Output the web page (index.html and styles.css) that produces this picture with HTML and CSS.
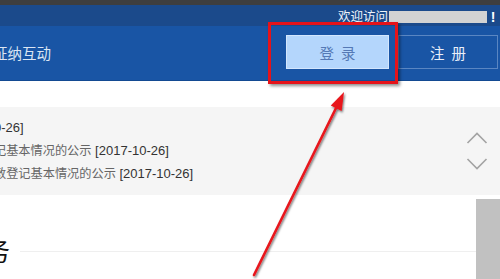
FILE: index.html
```html
<!DOCTYPE html>
<html lang="zh-CN">
<head>
<meta charset="utf-8">
<title>证纳互动</title>
<link rel="stylesheet" href="styles.css">
</head>
<body>
<div class="page">
  <div class="topstrip"></div>
  <div class="welcome">
    <span class="welcome-text">欢迎访问</span><span class="redact"></span><span class="bang">!</span>
  </div>
  <header class="header">
    <div class="site-title">证纳互动</div>
    <nav class="actions">
      <a class="btn btn-login">登 录</a>
      <a class="btn btn-register">注 册</a>
    </nav>
  </header>
  <div class="gap"></div>
  <section class="notice">
    <ul class="notice-list">
      <li><span class="date">0-26]</span></li>
      <li><span class="title">记基本情况的公示</span> <span class="date">[2017-10-26]</span></li>
      <li><span class="title">敦登记基本情况的公示</span> <span class="date">[2017-10-26]</span></li>
    </ul>
    <div class="arrows">
      <svg class="chev" width="22" height="12" viewBox="0 0 22 12"><polyline points="1.5,11 11,1.5 20.5,11" fill="none" stroke="#a3a3a3" stroke-width="1.6"/></svg>
      <svg class="chev" width="22" height="12" viewBox="0 0 22 12"><polyline points="1.5,1 11,10.5 20.5,1" fill="none" stroke="#a3a3a3" stroke-width="1.6"/></svg>
    </div>
  </section>
  <section class="content">
    <div class="main">
      <div class="heading"><h2>务</h2><span class="rule"></span></div>
    </div>
    <div class="scroll"></div>
  </section>
  <div class="annot-box"></div>
  <svg class="annot-arrow" width="500" height="279" viewBox="0 0 500 279">
    <defs>
      <filter id="sh" x="-20%" y="-20%" width="140%" height="140%">
        <feDropShadow dx="1" dy="1.5" stdDeviation="1" flood-color="#000" flood-opacity="0.55"/>
      </filter>
    </defs>
    <g filter="url(#sh)">
      <line x1="254" y1="275" x2="338" y2="104" stroke="#e8141b" stroke-width="2.6" stroke-linecap="round"/>
      <polygon points="344,92 341.6,111 330.8,105.6" fill="#e8141b"/>
    </g>
  </svg>
</div>
</body>
</html>
```
FILE: styles.css
```css
* { box-sizing: border-box; }
html, body { margin: 0; padding: 0; }
body {
  width: 500px;
  height: 279px;
  overflow: hidden;
  background: #fff;
  font-family: "Noto Sans CJK SC", "Liberation Sans", sans-serif;
}
.page {
  position: relative;
  width: 500px;
  height: 279px;
  overflow: hidden;
}
.topstrip {
  height: 5px;
  background: #3e3e3e;
}
.welcome {
  height: 21px;
  background: #1b4a8b;
  display: flex;
  justify-content: flex-end;
  align-items: center;
  padding-right: 4px;
  color: #eef3fa;
  font-size: 12.5px;
  line-height: 1;
}
.welcome-text { margin-top: 1px; }
.redact {
  display: inline-block;
  width: 98px;
  height: 12px;
  background: #d3d3d3;
  margin-left: 1px;
  margin-top: 2px;
}
.bang {
  display: inline-block;
  width: 6px;
  margin-left: 3px;
  text-align: center;
  font-family: "Liberation Sans", sans-serif;
  font-weight: bold;
  font-size: 14px;
  line-height: 14px;
  color: #ffffff;
  margin-top: 2px;
}
.header {
  height: 55px;
  background: #1955a5;
  border-bottom: 1px solid #134a92;
  display: flex;
  justify-content: space-between;
  align-items: flex-start;
}
.site-title {
  margin-left: -7px;
  margin-top: 17px;
  font-size: 14.5px;
  color: #dbe5f3;
  line-height: 20px;
}
.actions {
  display: flex;
  gap: 9px;
  margin-top: 9px;
  margin-right: 2px;
}
.btn {
  display: flex;
  align-items: center;
  justify-content: center;
  height: 34px;
  font-size: 14.5px;
  letter-spacing: 2px;
  text-indent: 2px;
}
.btn-login {
  width: 103px;
  background: #b4d6fc;
  border: 1px solid #d3e6fd;
  color: #5579b5;
}
.btn-register {
  width: 100px;
  border: 1px solid #5a86c2;
  color: #e9f0fa;
}
.gap { height: 26px; }
.notice {
  height: 88px;
  background: #f5f5f5;
  display: flex;
  justify-content: space-between;
  padding-top: 7px;
}
.notice-list {
  list-style: none;
  margin: 0 0 0 -6px;
  padding: 0;
}
.notice-list li {
  height: 23px;
  line-height: 23px;
  white-space: nowrap;
}
.title {
  font-size: 12.2px;
  color: #666;
}
.date {
  font-family: "Liberation Sans", sans-serif;
  font-size: 13px;
  color: #333;
}
.arrows {
  display: flex;
  flex-direction: column;
  gap: 14px;
  margin-top: 18px;
  margin-right: 12px;
}
.chev { display: block; }
.content {
  display: flex;
}
.main {
  flex: 1;
  padding-top: 40px;
}
.heading {
  display: flex;
  align-items: center;
}
.heading h2 {
  margin: 0 0 0 -16px;
  font-size: 26px;
  font-weight: normal;
  color: #111;
  line-height: 30px;
}
.rule {
  flex: 1;
  height: 1px;
  background: #efefef;
  margin-left: 10px;
  margin-top: 2px;
}
.scroll {
  width: 24px;
  height: 80px;
  margin-top: 4px;
  background: #c1c1c1;
}
.annot-box {
  position: absolute;
  left: 268px;
  top: 22px;
  width: 130px;
  height: 62px;
  border: 3px solid #e5131a;
  box-shadow: 2px 2px 3px rgba(0, 0, 0, 0.45);
}
.annot-arrow {
  position: absolute;
  left: 0;
  top: 0;
  pointer-events: none;
}
```
